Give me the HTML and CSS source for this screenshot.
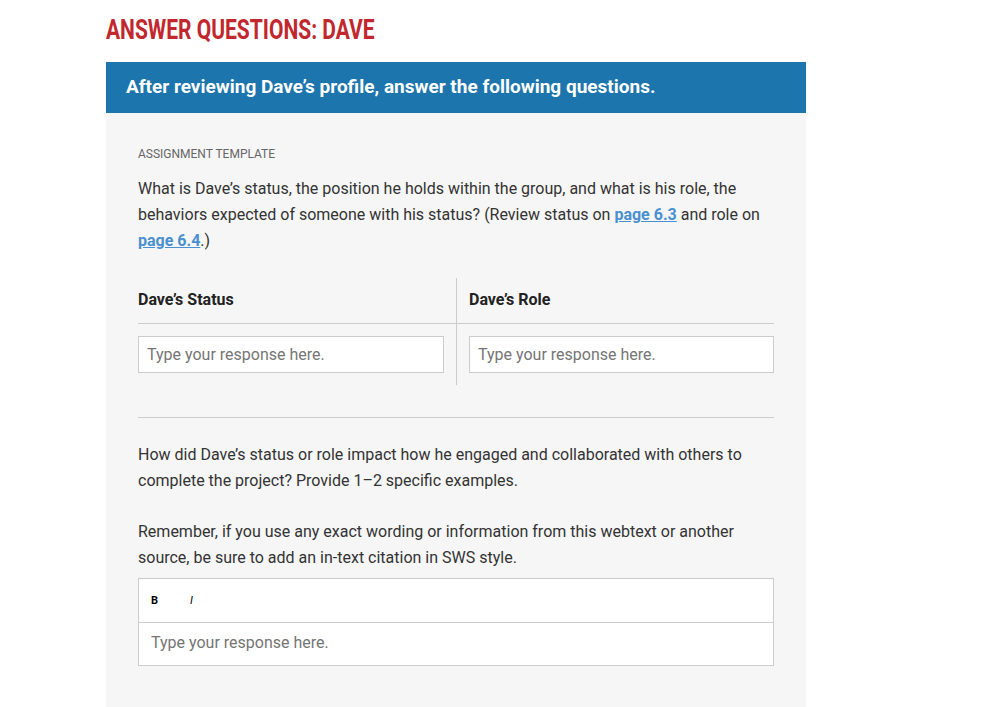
FILE: index.html
```html
<!DOCTYPE html>
<html lang="en">
<head>
    <meta charset="UTF-8">
    <meta name="viewport" content="width=device-width, initial-scale=1.0">
    <title>Answer Questions: Dave</title>
    <link rel="stylesheet" href="styles.css">
</head>
<body>
    <div class="page">
        <h1 class="page-title"><span>Answer Questions: Dave</span></h1>
        <div class="prompt-bar">After reviewing Dave’s profile, answer the following questions.</div>
        <div class="panel">
            <p class="eyebrow">Assignment Template</p>
            <p class="question intro">What is Dave’s status, the position he holds within the group, and what is his role, the behaviors expected of someone with his status? (Review status on <a href="#">page 6.3</a> and role on <a href="#">page 6.4</a>.)</p>

            <div class="answer-table">
                <div class="col">
                    <div class="col-head">Dave’s Status</div>
                    <div class="col-body">
                        <input type="text" class="field" placeholder="Type your response here.">
                    </div>
                </div>
                <div class="col">
                    <div class="col-head">Dave’s Role</div>
                    <div class="col-body">
                        <input type="text" class="field" placeholder="Type your response here.">
                    </div>
                </div>
            </div>

            <hr class="divider">

            <p class="question">How did Dave’s status or role impact how he engaged and collaborated with others to complete the project? Provide 1–2 specific examples.</p>
            <p class="question">Remember, if you use any exact wording or information from this webtext or another source, be sure to add an in-text citation in SWS style.</p>

            <div class="editor">
                <div class="toolbar">
                    <button class="tool tool-b">B</button>
                    <button class="tool tool-i">I</button>
                </div>
                <div class="editor-body">Type your response here.</div>
            </div>
        </div>
    </div>
</body>
</html>
```

FILE: styles.css
```css
body {
    margin: 0;
    background-color: #fff;
    font-family: Roboto, "Liberation Sans", sans-serif;
    color: #333;
}

.page {
    width: 700px;
    margin-left: 106px;
}

.page-title {
    margin: 0;
    padding-top: 13px;
    height: 62px;
    box-sizing: border-box;
    font-family: Roboto, sans-serif;
    font-weight: bold;
    font-size: 28px;
    line-height: 34px;
    text-transform: uppercase;
    color: #c1272d;
    white-space: nowrap;
}

/* narrow headline face */
.page-title span {
    display: inline-block;
    transform: scaleX(0.75);
    transform-origin: left center;
}

.prompt-bar {
    background-color: #1d75ae;
    color: #fff;
    font-weight: bold;
    font-size: 19px;
    height: 51px;
    line-height: 50px;
    padding-left: 20px;
}

.panel {
    background-color: #f6f6f6;
    padding: 33px 32px 42px;
}

.eyebrow {
    margin: 0 0 14px;
    font-size: 12px;
    line-height: 16px;
    text-transform: uppercase;
    color: #666;
}

.question {
    margin: 0 0 25px;
    font-size: 16px;
    line-height: 26px;
    color: #333;
}

.question.intro {
    margin-bottom: 24px;
}

.question a {
    color: #4a90d0;
    font-weight: bold;
}

.answer-table {
    display: grid;
    grid-template-columns: 1fr 1fr;
}

.col + .col {
    border-left: 1px solid #ccc;
}

.col-head {
    font-weight: bold;
    font-size: 16px;
    color: #222;
    height: 45px;
    line-height: 44px;
    border-bottom: 1px solid #ccc;
}

.col + .col .col-head {
    padding-left: 12px;
}

.col-body {
    padding: 12px 12px 12px 0;
}

.col + .col .col-body {
    padding: 12px 0 12px 12px;
}

.field {
    display: block;
    width: 100%;
    box-sizing: border-box;
    height: 37px;
    border: 1px solid #ccc;
    background: #fff;
    font-family: Roboto, sans-serif;
    font-size: 16px;
    padding: 0 8px;
    color: #333;
}

.field::placeholder {
    color: #757575;
}

.divider {
    border: 0;
    border-top: 1px solid #ccc;
    margin: 32px 0 24px;
}

.question + .question {
    margin-bottom: 7px;
}

.editor {
    background: #fff;
    border: 1px solid #ccc;
}

.toolbar {
    height: 43px;
    border-bottom: 1px solid #ccc;
    display: flex;
    align-items: center;
    padding-left: 8px;
}

.tool {
    background: none;
    border: none;
    font-family: Roboto, sans-serif;
    font-size: 11px;
    color: #000;
    padding: 0 4px;
    margin-right: 24px;
    cursor: pointer;
}

.tool-b {
    font-weight: bold;
}

.tool-i {
    font-style: italic;
}

.editor-body {
    height: 42px;
    line-height: 40px;
    padding-left: 12px;
    font-size: 16px;
    color: #757575;
}
```
